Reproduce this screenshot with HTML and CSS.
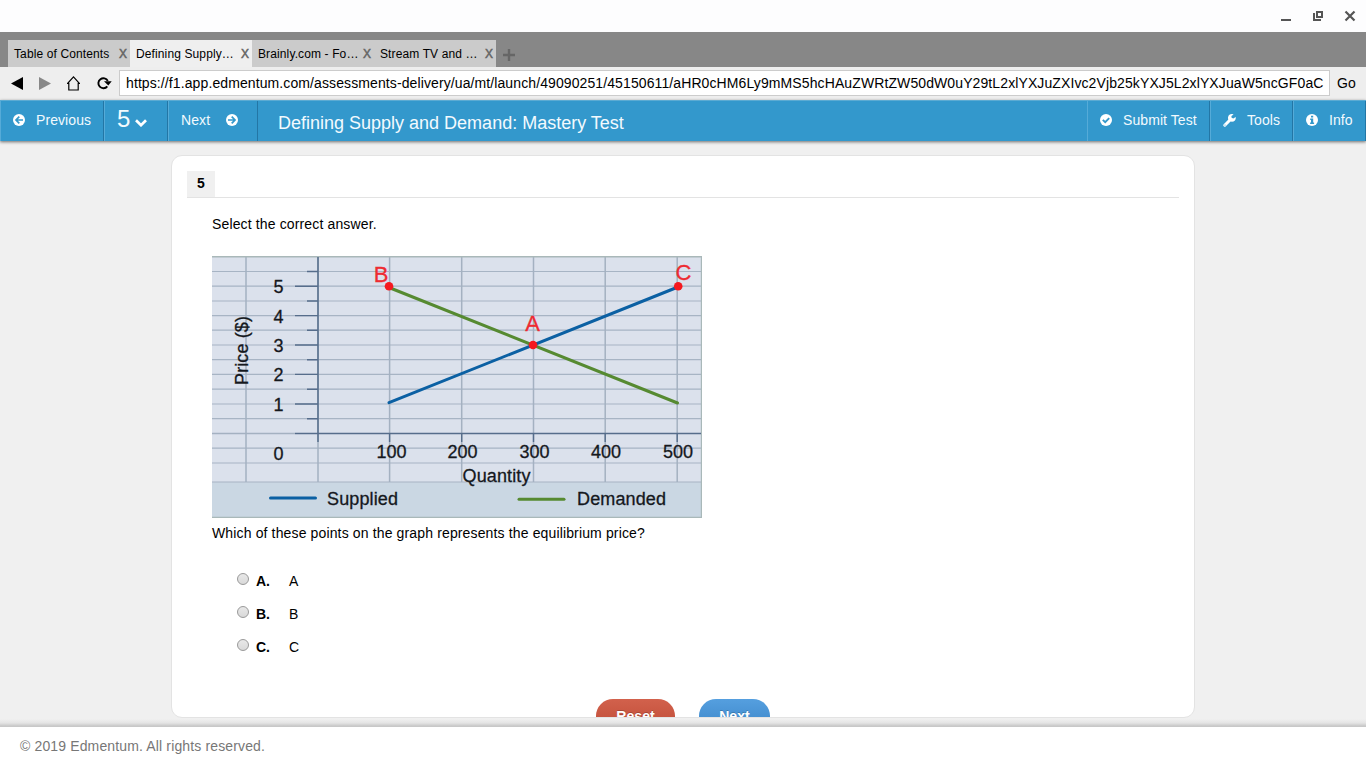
FILE: index.html
```html
<!DOCTYPE html>
<html lang="en">
<head>
    <meta charset="UTF-8">
    <meta name="viewport" content="width=device-width, initial-scale=1.0">
    <title>Defining Supply and Demand: Mastery Test</title>
    <link rel="stylesheet" href="styles.css">
</head>
<body>
    <div class="window-bar">
        <svg width="12" height="12" viewBox="0 0 12 12"><path d="M1 10h10" stroke="#555" stroke-width="2"/></svg>
        <svg width="12" height="12" viewBox="0 0 12 12" fill="none" stroke="#555" stroke-width="2"><path d="M5 2H10v5H5z"/><path d="M2 3v7h7"/></svg>
        <svg width="12" height="12" viewBox="0 0 12 12"><path d="M1.500 1.500l9 9M10.500 1.500l-9 9" stroke="#555" stroke-width="2.200"/></svg>
    </div>

    <div class="tabs">
        <div class="tab"><span class="tab-title">Table of Contents</span><span class="tab-close">X</span></div>
        <div class="tab active"><span class="tab-title">Defining Supply…</span><span class="tab-close">X</span></div>
        <div class="tab"><span class="tab-title">Brainly.com - Fo…</span><span class="tab-close">X</span></div>
        <div class="tab"><span class="tab-title">Stream TV and …</span><span class="tab-close">X</span></div>
        <svg class="tab-add" width="12" height="12" viewBox="0 0 12 12"><path d="M6 0v12M0 6h12" stroke="#666" stroke-width="2.400"/></svg>
    </div>

    <div class="address-bar">
        <div class="nav-icons">
            <svg width="12" height="13" viewBox="0 0 12 13"><path d="M12 0v13L0 6.500z" fill="#000"/></svg>
            <svg width="12" height="13" viewBox="0 0 12 13"><path d="M0 0v13l12-6.500z" fill="#888"/></svg>
            <svg width="13" height="15" viewBox="0 0 13 15"><path d="M.6 7.400L6.500.9l5.900 6.500H11.200V14H1.800V7.400z" fill="none" stroke="#000" stroke-width="1.200"/></svg>
            <svg width="16" height="14" viewBox="0 0 16 14"><path d="M11.300 10.300A5 5 0 1 1 11.800 4.900" fill="none" stroke="#000" stroke-width="1.900"/><path d="M8 5.300H15.700L12.300 9.600z" fill="#000"/></svg>
        </div>
        <div class="url">https://f1.app.edmentum.com/assessments-delivery/ua/mt/launch/49090251/45150611/aHR0cHM6Ly9mMS5hcHAuZWRtZW50dW0uY29tL2xlYXJuZXIvc2Vjb25kYXJ5L2xlYXJuaW5ncGF0aC</div>
        <span class="go">Go</span>
    </div>

    <div class="toolbar">
        <div class="tool prev">
            <svg width="12" height="12" viewBox="0 0 12 12"><circle cx="6" cy="6" r="6" fill="#fff"/><path d="M6.300 2.700L3 6l3.300 3.300M3.200 6H10" fill="none" stroke="#3398cb" stroke-width="1.700"/></svg>
            <span>Previous</span>
        </div>
        <div class="tool number">
            <span>5</span>
            <svg width="12" height="8" viewBox="0 0 12 8"><path d="M1 1.300L6 6.200l5-4.900" fill="none" stroke="#fff" stroke-width="2.700"/></svg>
        </div>
        <div class="tool next">
            <span>Next</span>
            <svg width="12" height="12" viewBox="0 0 12 12"><circle cx="6" cy="6" r="6" fill="#fff"/><path d="M5.700 2.700L9 6 5.700 9.300M8.800 6H2" fill="none" stroke="#3398cb" stroke-width="1.700"/></svg>
        </div>
        <h1 class="test-title">Defining Supply and Demand: Mastery Test</h1>
        <div class="tool submit">
            <svg width="12" height="12" viewBox="0 0 12 12"><circle cx="6" cy="6" r="6" fill="#fff"/><path d="M2.800 5.900L5.200 8.200 9.200 4.200" fill="none" stroke="#3398cb" stroke-width="1.900"/></svg>
            <span>Submit Test</span>
        </div>
        <div class="tool tools">
            <svg width="13" height="13" viewBox="0 0 13 13"><path d="M1.800 11.200L7.200 5.800" stroke="#fff" stroke-width="3" stroke-linecap="round"/><path d="M12.700 3.100A3.900 3.900 0 1 1 10.600.4L8.400 1.900l.2 1.900 1.700.8z" fill="#fff"/><circle cx="2" cy="11" r=".6" fill="#3398cb"/></svg>
            <span>Tools</span>
        </div>
        <div class="tool info">
            <svg width="12" height="12" viewBox="0 0 12 12"><circle cx="6" cy="6" r="6" fill="#fff"/><path d="M5 1.700h2.200v1.700H5zM4.200 4.500h3v4h.9V10H4.100V8.500H5V6h-.8z" fill="#3398cb"/></svg>
            <span>Info</span>
        </div>
    </div>

    <div class="content">
        <div class="card">
            <div class="question-header"><span class="question-number">5</span></div>
            <div class="question">
                <p class="prompt">Select the correct answer.</p>
                <svg class="graph" width="490" height="262" viewBox="212 256 490 262">
                    <rect x="212" y="256" width="490" height="262" fill="#dbe1ec"/>
                    <rect x="212" y="482" width="490" height="36" fill="#cad7e3"/>
                    <!-- grid -->
                    <path d="M212 271.500h490M212 286.200h490M212 301h490M212 315.600h490M212 330.200h490M212 345h490M212 359.700h490M212 374.400h490M212 389.200h490M212 404h490M212 418.700h490M212 448.200h490M212 463h490M212 482h490" stroke="#a7b4c4" stroke-width="1.200"/>
                    <path d="M246 257v225M318 257v225M389.600 257v225M461.700 257v225M533.500 257v225M605.200 257v225M677.200 257v225M212 433.500h83" stroke="#a4b1c1" stroke-width="1.500"/>
                    <path d="M212 256.700h489.500V517.500H212" fill="none" stroke="#a9b8b9" stroke-width="1.400"/>
                    <!-- axes -->
                    <path d="M318 257v185M295 433.500h406" stroke="#566d8b" stroke-width="1.500"/>
                    <path d="M295 286.200h23M295 315.600h23M295 345h23M295 374.400h23M295 404h23M307 271.500h11M307 301h11M307 330.200h11M307 359.700h11M307 389.200h11M307 418.700h11M389.600 433v9M461.700 433v9M533.500 433v9M605.200 433v9M677.200 433v9" stroke="#566d8b" stroke-width="1.400"/>
                    <path d="M389 287.500L677.500 403" class="line demanded"/>
                    <path d="M389 402.700L678 287" class="line supplied"/>
                    <circle cx="389" cy="286.300" r="4.300" class="point"/>
                    <circle cx="533" cy="345" r="4.300" class="point"/>
                    <circle cx="678.200" cy="286.300" r="4.300" class="point"/>
                    <g class="point-labels">
                        <text x="381" y="281.500">B</text>
                        <text x="532.500" y="330.500">A</text>
                        <text x="683.500" y="280">C</text>
                    </g>
                    <g class="labels">
                        <text x="278.500" y="293">5</text>
                        <text x="278.500" y="322.500">4</text>
                        <text x="278.500" y="352">3</text>
                        <text x="278.500" y="381">2</text>
                        <text x="278.500" y="411">1</text>
                        <text x="278.500" y="459.500">0</text>
                        <text x="391.500" y="457.500">100</text>
                        <text x="462.500" y="457.500">200</text>
                        <text x="534.500" y="457.500">300</text>
                        <text x="606" y="457.500">400</text>
                        <text x="678" y="457.500">500</text>
                        <text x="496.500" y="481.500" textLength="68">Quantity</text>
                        <text x="362.500" y="504.500" textLength="71">Supplied</text>
                        <text x="621.500" y="504.500" textLength="89">Demanded</text>
                        <text transform="translate(248 350.500) rotate(-90)" textLength="69">Price ($)</text>
                    </g>
                    <path d="M270.500 498H315.500" class="line supplied"/>
                    <path d="M519 499.200H564" class="line demanded"/>
                </svg>
                <p class="prompt second">Which of these points on the graph represents the equilibrium price?</p>
                <div class="answers">
                    <div class="answer"><span class="radio"></span><b>A.</b><span>A</span></div>
                    <div class="answer"><span class="radio"></span><b>B.</b><span>B</span></div>
                    <div class="answer"><span class="radio"></span><b>C.</b><span>C</span></div>
                </div>
            </div>
            <div class="buttons">
                <div class="btn reset">Reset</div>
                <div class="btn next-btn">Next</div>
            </div>
        </div>
    </div>

    <div class="footer">© 2019 Edmentum. All rights reserved.</div>
</body>
</html>
```
FILE: styles.css
```css
* {
    box-sizing: border-box;
}
body {
    margin: 0;
    width: 1366px;
    height: 768px;
    overflow: hidden;
    display: flex;
    flex-direction: column;
    font-family: "Liberation Sans", Arial, sans-serif;
    font-size: 14px;
    color: #000;
    background: #f0f0f0;
}
svg {
    display: block;
    flex: none;
}
.window-bar {
    height: 32px;
    flex: none;
    display: flex;
    justify-content: flex-end;
    align-items: center;
    gap: 20px;
    padding-right: 10px;
    background: #fdfdfe;
}
.tabs {
    height: 35px;
    flex: none;
    display: flex;
    padding: 8px 0 0 8px;
    background: #878787;
}
.tab {
    width: 122px;
    display: flex;
    justify-content: space-between;
    padding: 0 3px 0 6px;
    font-size: 12px;
    line-height: 28px;
    white-space: nowrap;
    background: #cbcbcb;
}
.tab-title {
    letter-spacing: 0.12px;
}
.tab.active {
    background: #efefef;
}
.tab-close {
    color: #666;
    -webkit-text-stroke: 0.5px #666;
}
.tab-add {
    margin: 9px 0 0 7px;
}
.address-bar {
    height: 33px;
    flex: none;
    display: flex;
    align-items: flex-start;
    padding: 3px 0 0 11px;
    background: #eee;
}
.nav-icons {
    width: 108px;
    height: 26px;
    display: flex;
    align-items: center;
    gap: 16px;
}
.url {
    width: 1211px;
    height: 26px;
    padding: 0 6px;
    overflow: hidden;
    line-height: 25px;
    letter-spacing: 0.103px;
    white-space: nowrap;
    background: #fff;
    border: 1px solid #ccc;
}
.go {
    margin-left: 7px;
    line-height: 27px;
}
.toolbar {
    position: relative;
    height: 41px;
    flex: none;
    display: flex;
    color: #f2fafe;
    background: #3398cc;
    border-top: 1px solid #5babd3;
    box-shadow: 0 1px 3px rgba(0, 0, 0, 0.55);
}
.tool {
    display: flex;
    align-items: center;
    padding-bottom: 2px;
    border-left: 1px solid #55abd8;
    border-right: 1px solid #2376a5;
    letter-spacing: 0.08px;
}
.prev {
    width: 104px;
    padding-left: 12px;
    gap: 11px;
}
.number {
    width: 64px;
    padding: 0 0 4px 12px;
    gap: 5px;
    font-size: 24px;
}
.number svg {
    margin-top: 7px;
}
.next {
    width: 90px;
    padding-left: 12px;
    gap: 16px;
}
.test-title {
    flex: 1;
    margin: 0;
    padding: 3px 0 0 20px;
    font-size: 18px;
    font-weight: normal;
    line-height: 39px;
}
.submit {
    width: 123px;
    padding-left: 12px;
    gap: 11px;
}
.tools {
    width: 83px;
    padding-left: 12px;
    gap: 11px;
}
.info {
    width: 73px;
    padding-left: 12px;
    gap: 11px;
}
.content {
    height: 586px;
    flex: none;
    padding: 14px 171px 0;
    background: linear-gradient(#f0f0f0 578px, #e4e4e4 582px, #c8c8c8 585px);
}
.card {
    height: 563px;
    overflow: hidden;
    padding: 15px 15px 0;
    background: #fff;
    border: 1px solid #e3e3e3;
    border-radius: 11px;
}
.question-header {
    height: 27px;
    border-bottom: 1px solid #e3e3e3;
}
.question-number {
    display: block;
    width: 28px;
    height: 26px;
    font-weight: bold;
    line-height: 25px;
    text-align: center;
    background: #f0f0f0;
}
.question {
    padding: 17px 25px 0;
}
.prompt {
    margin: 0;
    line-height: 18px;
    letter-spacing: 0.14px;
}
.graph {
    margin: 23px 0 6px;
}
.line {
    fill: none;
    stroke-width: 3;
    stroke-linecap: round;
}
.supplied {
    stroke: #0b60a3;
}
.demanded {
    stroke: #568a31;
}
.point {
    fill: #f5191f;
}
.point-labels {
    fill: #ee2b32;
    stroke: #ee2b32;
    stroke-width: 0.3px;
    font-size: 22px;
    text-anchor: middle;
}
.labels {
    fill: #15181d;
    stroke: #15181d;
    stroke-width: 0.3px;
    font-size: 18px;
    text-anchor: middle;
}
.answers {
    display: flex;
    flex-direction: column;
    gap: 15px;
    padding: 30px 0 0 25px;
}
.answer {
    height: 18px;
    display: flex;
    line-height: 18px;
}
.answer b {
    width: 33px;
    margin-left: 7px;
}
.radio {
    width: 12px;
    height: 12px;
    margin-top: 1px;
    border: 1px solid #999;
    border-radius: 50%;
    background: linear-gradient(#e8e8e8, #d9d9d9);
}
.buttons {
    display: flex;
    justify-content: center;
    gap: 24px;
    margin-top: 43px;
}
.btn {
    height: 34px;
    border-radius: 17px;
    color: #fff;
    font-weight: bold;
    line-height: 34px;
    text-align: center;
    letter-spacing: 0.1px;
    text-shadow: 0 -1px 0 rgba(0, 0, 0, 0.2);
}
.reset {
    width: 79px;
    background: linear-gradient(#d2614c, #bd4a35);
}
.next-btn {
    width: 71px;
    background: linear-gradient(#559fdf, #3a84c6);
}
.footer {
    flex: 1;
    padding-left: 20px;
    color: #777;
    line-height: 39px;
    background: #fff;
    letter-spacing: 0.14px;
}
```
